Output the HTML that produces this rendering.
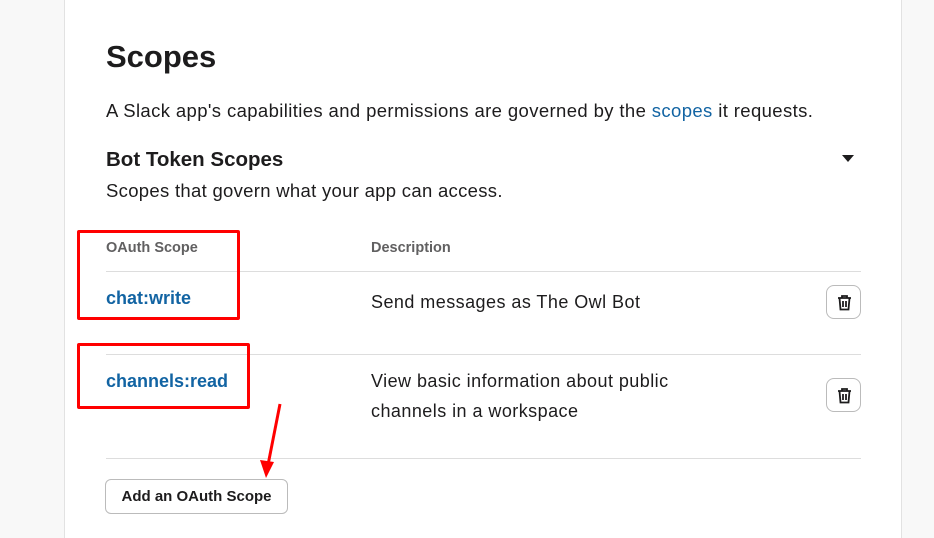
<!DOCTYPE html>
<html><head><meta charset="utf-8"><style>
*{margin:0;padding:0;box-sizing:border-box}
body{width:934px;height:531px;background:#f8f8f8;font-family:"Liberation Sans",sans-serif;color:#1d1c1d;position:relative;overflow:hidden}
.card{position:absolute;left:64px;top:-2px;width:838px;height:540px;background:#fff;border-left:1px solid #e2e2e2;border-right:1px solid #e2e2e2}
.a{position:absolute;white-space:nowrap}
.line{position:absolute;left:106px;width:755px;height:1px;background:#dddddd}
.link{color:#1264a3}
.scope{color:#1264a3;font-weight:bold;font-size:18px}
.desc{font-size:18px;line-height:30px;letter-spacing:0.45px}
.btn{position:absolute;left:826px;width:35px;height:34px;border:1px solid #bbb;border-radius:8px;background:#fff}
.btn svg{position:absolute;left:9px;top:8px}
.red{position:absolute;border:3px solid #f00;border-radius:2px}
</style></head><body>
<div class="card"></div>
<div class="a" style="left:106px;top:39px;font-size:31px;font-weight:bold">Scopes</div>
<div class="a" style="left:106px;top:100px;font-size:18.5px;letter-spacing:0.38px">A Slack app's capabilities and permissions are governed by the <span class="link">scopes</span> it requests.</div>
<div class="a" style="left:106px;top:148px;font-size:20.5px;font-weight:bold">Bot Token Scopes</div>
<div class="a" style="left:842px;top:155px;width:0;height:0;border-left:6px solid transparent;border-right:6px solid transparent;border-top:7px solid #1d1c1d"></div>
<div class="a" style="left:106px;top:180px;font-size:18.5px;letter-spacing:0.3px">Scopes that govern what your app can access.</div>
<div class="a" style="left:106px;top:240px;font-size:14.5px;color:#616061;font-weight:bold">OAuth Scope</div>
<div class="a" style="left:371px;top:240px;font-size:14.5px;color:#616061;font-weight:bold">Description</div>
<div class="line" style="top:271px"></div>
<div class="a scope" style="left:106px;top:288px">chat:write</div>
<div class="a desc" style="left:371px;top:287px">Send messages as The Owl Bot</div>
<div class="btn" style="top:285px"><svg width="17" height="17" viewBox="0 0 17 17" fill="none" stroke="#1d1c1d" stroke-width="1.8"><path d="M2 4h13M6 4V2h5v2M3.5 4l1 11.5h8l1-11.5M7 7v6M10 7v6"/></svg></div>
<div class="line" style="top:354px"></div>
<div class="a scope" style="left:106px;top:371px">channels:read</div>
<div class="a desc" style="left:371px;top:366px">View basic information about public<br>channels in a workspace</div>
<div class="btn" style="top:378px"><svg width="17" height="17" viewBox="0 0 17 17" fill="none" stroke="#1d1c1d" stroke-width="1.8"><path d="M2 4h13M6 4V2h5v2M3.5 4l1 11.5h8l1-11.5M7 7v6M10 7v6"/></svg></div>
<div class="line" style="top:458px"></div>
<div class="a" style="left:105px;top:479px;width:183px;height:35px;border:1px solid #bbb;border-radius:6px;font-size:15px;font-weight:bold;text-align:center;line-height:33px">Add an OAuth Scope</div>
<div class="red" style="left:77px;top:230px;width:163px;height:90px"></div>
<div class="red" style="left:77px;top:343px;width:173px;height:66px"></div>
<svg class="a" style="left:255px;top:400px" width="35" height="85"><path d="M25 4L12 70" stroke="#f00" stroke-width="3" fill="none"/><path d="M5 60L11 78L19 62Z" fill="#f00"/></svg>
</body></html>
